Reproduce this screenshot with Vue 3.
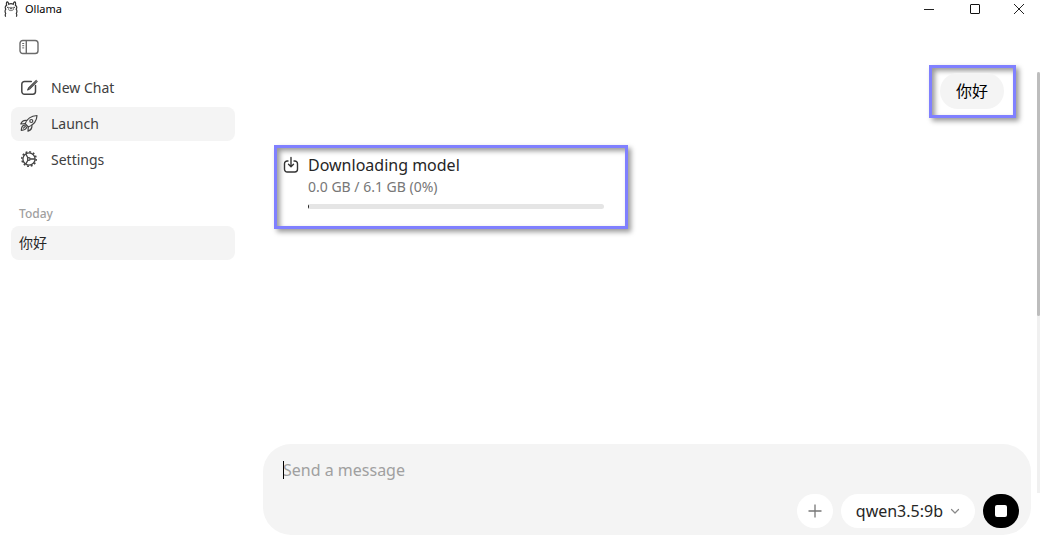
<script setup>
import { ref } from 'vue'

const draft = ref('')
const model = ref('qwen3.5:9b')
const percent = 0
</script>

<template>
  <div class="window">
    <header class="titlebar">
      <svg class="llama" width="14" height="16" viewBox="0 0 14 16" fill="none" stroke="#333" stroke-width="1.2" stroke-linecap="round">
        <path d="M1.500 15.300c-.4-1-.3-2 .2-2.800C.900 11 .9 9.400 1.800 8.200.800 6.700 1.200 5 2.600 4.400 2.300 2.800 2.400 1 3.100.8 4 .6 4.500 2 4.700 3.200c1.300-.7 3.300-.7 4.600 0C9.500 2 10 .6 10.900.8c.7.2.8 2 .5 3.600 1.400.6 1.800 2.300.8 3.800.9 1.200.9 2.800.1 4.300.5.8.6 1.800.2 2.800" />
        <ellipse cx="7" cy="8" rx="2.600" ry="1.700" stroke="#777" stroke-width=".9" />
        <path d="M3.600 6.300h.5M9.900 6.300h.5M6.700 7.700h.6" />
      </svg>
      <h1 class="app-name">Ollama</h1>
      <div class="controls">
        <button type="button" aria-label="Minimize">
          <svg width="12" height="12" viewBox="0 0 12 12" stroke="#222" fill="none"><path d="M1 6.500h10" /></svg>
        </button>
        <button type="button" aria-label="Maximize">
          <svg width="12" height="12" viewBox="0 0 12 12" stroke="#111" fill="none"><rect x="1.500" y="1.500" width="9" height="9" rx=".5" /></svg>
        </button>
        <button type="button" aria-label="Close">
          <svg width="12" height="12" viewBox="0 0 12 12" stroke="#222" fill="none"><path d="M1 1l10 10M11 1L1 11" /></svg>
        </button>
      </div>
    </header>

    <div class="body">
      <aside class="sidebar">
        <button type="button" class="toggle" aria-label="Toggle sidebar">
          <svg width="20" height="16" viewBox="0 0 20 16" fill="none" stroke="#6b6b6b" stroke-width="1.400">
            <rect x="1" y="1.500" width="18" height="13" rx="2.800" />
            <path d="M7.300 1.500v13" />
            <path d="M3.200 4.500h2M3.200 6.700h2M3.200 8.900h2" stroke-width="1" />
          </svg>
        </button>
        <nav class="nav">
          <a href="#new">
            <svg width="20" height="20" viewBox="0 0 20 20" fill="none" stroke="#444" stroke-width="1.500" stroke-linecap="round" stroke-linejoin="round">
              <path d="M12.300 4.500H5.500A2.700 2.700 0 0 0 2.800 7.200v7.300a2.700 2.700 0 0 0 2.700 2.700h8.300a2.700 2.700 0 0 0 2.700-2.700V8.500" />
              <path d="M17.300 3.400L9.600 11l-1 2 2-1L18.200 4.300" stroke-width="1.100" />
            </svg>
            New Chat
          </a>
          <a href="#launch" class="active">
            <svg width="20" height="20" viewBox="0 0 20 20" fill="none" stroke="#444" stroke-width="1.200" stroke-linecap="round" stroke-linejoin="round">
              <path d="M6.200 10.700C8 5.600 12 2.800 18 2.500c-.2 6-3.600 9.500-8.700 11.500z" />
              <circle cx="12.300" cy="8" r="1.500" />
              <path d="M8 7.500C5 6.900 2.800 8.400 1.800 11l4.400-.3M12.800 12c.6 3-1.100 5.200-3.800 6.200l.3-4.200" />
              <path d="M5.500 12.200c-2 .2-3 2-3.200 5.200 3.200-.2 5-1.200 5.300-3.200M4.500 15.200l2.500-2.500" />
            </svg>
            Launch
          </a>
          <a href="#settings">
            <svg width="20" height="20" viewBox="0 0 20 20" fill="none" stroke="#444" stroke-width="1.300">
              <circle cx="10" cy="10" r="6.100" />
              <circle cx="10" cy="10" r="7.200" stroke-width="1.500" stroke-dasharray="1.885 1.885" />
              <path d="M11.200 10h4.900M9 9L6.700 4.900M9 11l-2.300 4.100" />
              <circle cx="9.800" cy="10" r="1.300" />
            </svg>
            Settings
          </a>
        </nav>
        <h2 class="group">Today</h2>
        <a class="history" href="#chat">你好</a>
      </aside>

      <main class="main">
        <section class="messages">
          <div class="frame sent">
            <p class="bubble">你好</p>
          </div>
          <div class="frame download">
            <svg width="16" height="18" viewBox="0 0 16 18" fill="none" stroke="#333" stroke-width="1.400" stroke-linecap="round" stroke-linejoin="round">
              <path d="M5 5H4.200A2.700 2.700 0 0 0 1.500 7.700v5.600A2.700 2.700 0 0 0 4.200 16h7.600a2.700 2.700 0 0 0 2.700-2.700V7.700A2.700 2.700 0 0 0 11.800 5H11" />
              <path d="M8 1.500v9M5.500 8.300L8 10.800l2.500-2.500" />
            </svg>
            <div class="details">
              <p class="title">Downloading model</p>
              <p class="size">0.0 GB / 6.1 GB (0%)</p>
              <div class="track" role="progressbar" aria-label="Download" :aria-valuenow="percent">
                <div class="fill" :style="{ width: percent + '%' }"></div>
              </div>
            </div>
          </div>
        </section>

        <form class="composer" @submit.prevent>
          <div class="field">
            <span class="caret"></span>
            <textarea v-model="draft" rows="1" aria-label="Message" placeholder="Send a message"></textarea>
          </div>
          <div class="actions">
            <button type="button" class="add" aria-label="Add attachment">
              <svg width="14" height="14" viewBox="0 0 14 14" stroke="#777" stroke-width="1.300" fill="none"><path d="M7 .5v13M.5 7h13" /></svg>
            </button>
            <button type="button" class="model">
              {{ model }}
              <svg width="10" height="10" viewBox="0 0 10 10" stroke="#888" stroke-width="1.200" fill="none" stroke-linecap="round" stroke-linejoin="round"><path d="M1.500 3.500L5 7l3.500-3.500" /></svg>
            </button>
            <button type="submit" class="stop" aria-label="Stop"><span></span></button>
          </div>
        </form>
      </main>
      <div class="scrollbar"><div class="thumb"></div></div>
    </div>
  </div>
</template>

<style>
body {
  margin: 0;
  background: #fff;
}
</style>

<style scoped>
* {
  box-sizing: border-box;
}
.window {
  height: 100vh;
  display: flex;
  flex-direction: column;
  background: #fff;
  color: #262626;
  font-family: "Noto Sans", "Noto Sans CJK SC", sans-serif;
}
h1, h2, p {
  margin: 0;
  font-weight: 400;
}
button {
  border: 0;
  padding: 0;
  background: none;
  font: inherit;
  color: inherit;
  display: flex;
  align-items: center;
  justify-content: center;
}
a {
  color: inherit;
  text-decoration: none;
}
svg {
  flex: none;
}
.titlebar {
  height: 18px;
  flex: none;
  display: flex;
  align-items: center;
  padding-left: 4px;
  gap: 7px;
}
.app-name {
  font-size: 11px;
  line-height: 16px;
  color: #000;
}
.controls {
  margin-left: auto;
  display: flex;
}
.controls button {
  width: 46px;
  height: 16px;
}
.controls button:last-child {
  width: 42px;
}
.body {
  flex: 1;
  min-height: 0;
  display: flex;
}
.sidebar {
  width: 247px;
  flex: none;
  padding: 20px 12px 0 11px;
}
.toggle {
  width: 36px;
  height: 18px;
}
.nav {
  display: flex;
  flex-direction: column;
  gap: 2px;
  margin-top: 15px;
}
.nav a {
  display: flex;
  align-items: center;
  gap: 12px;
  height: 34px;
  padding: 0 8px 2px;
  border-radius: 8px;
  font-size: 14px;
  color: #404040;
}
.nav a.active,
.history {
  background: #f4f4f4;
}
.group {
  margin-top: 27px;
  padding: 0 8px;
  font-size: 12px;
  line-height: 20px;
  font-weight: 500;
  color: #a0a0a0;
}
.history {
  display: block;
  margin-top: 2px;
  padding: 0 8px;
  border-radius: 8px;
  font-size: 14px;
  line-height: 34px;
}
.main {
  flex: 1;
  min-width: 0;
  display: flex;
  flex-direction: column;
  padding: 0 6px 8px 16px;
}
.messages {
  flex: 1;
  min-height: 0;
  display: flex;
  flex-direction: column;
  align-items: flex-start;
  gap: 27px;
  padding: 47px 15px 0 11px;
}
.frame {
  border: 3px solid #8080ff;
  box-shadow: 3px 3px 5px rgba(0, 0, 0, 0.4), inset 3px 3px 5px rgba(0, 0, 0, 0.4);
}
.sent {
  align-self: flex-end;
  padding: 5px 9px 6px 8px;
}
.bubble {
  padding: 0 16px;
  border-radius: 18px;
  background: #f4f4f4;
  font-size: 16px;
  line-height: 36px;
  color: #000;
}
.download {
  width: 354px;
  display: flex;
  gap: 9px;
  padding: 6px 21px 17px 6px;
}
.download svg {
  margin-top: 2px;
}
.details {
  flex: 1;
}
.title {
  font-size: 16px;
  line-height: 22px;
}
.size {
  font-size: 14px;
  line-height: 22px;
  color: #777;
}
.track {
  height: 5px;
  margin-top: 6px;
  border-radius: 3px;
  background: #e5e5e5;
  overflow: hidden;
}
.fill {
  min-width: 1px;
  height: 100%;
  background: #222;
}
.composer {
  padding: 14px 12px 7px 20px;
  border-radius: 28px;
  background: #f4f4f4;
}
.field {
  position: relative;
  display: flex;
}
.caret {
  position: absolute;
  left: 0;
  top: 3px;
  width: 1px;
  height: 18px;
  background: #000;
}
textarea {
  flex: 1;
  height: 24px;
  border: 0;
  padding: 0;
  background: none;
  resize: none;
  outline: 0;
  overflow: hidden;
  font: inherit;
  font-size: 16px;
  line-height: 24px;
  color: inherit;
}
textarea::placeholder {
  color: #a0a0a0;
}
.actions {
  display: flex;
  justify-content: flex-end;
  align-items: center;
  gap: 8px;
  margin-top: 12px;
}
.add {
  width: 36px;
  height: 34px;
  border-radius: 18px;
  background: #fff;
}
.model {
  height: 34px;
  padding: 0 15px;
  gap: 7px;
  border-radius: 17px;
  background: #fff;
  font-size: 16px;
}
.stop {
  width: 36px;
  height: 34px;
  border-radius: 18px;
  background: #000;
}
.stop span {
  width: 12px;
  height: 12px;
  border-radius: 2px;
  background: #fff;
}
.scrollbar {
  width: 3px;
  flex: none;
  margin: 54px 0 50px;
  background: #f0f0f0;
}
.thumb {
  height: 58%;
  border-radius: 2px;
  background: #bdbdbd;
}
</style>
